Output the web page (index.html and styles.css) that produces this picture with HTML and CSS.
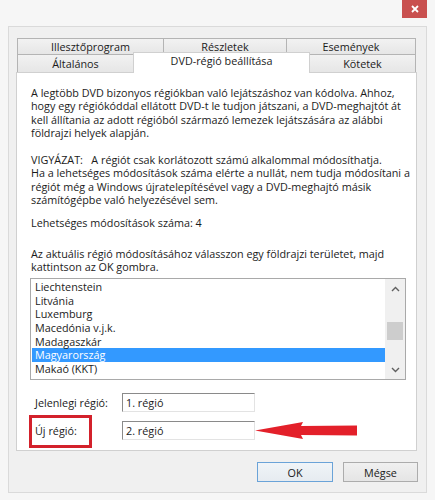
FILE: index.html
```html
<!DOCTYPE html>
<html lang="hu">
<head>
  <meta charset="UTF-8">
  <meta name="viewport" content="width=device-width, initial-scale=1">
  <title>DVD-régió beállítása</title>
  <link rel="stylesheet" href="styles.css">
</head>
<body>
  <div class="window">
    <div class="titlebar">
      <button class="close-btn" aria-label="Bezárás">
        <svg width="8" height="8" viewBox="0 0 8 8"><path d="M1 1 L7 7 M7 1 L1 7" stroke="#fff" stroke-width="1.8"/></svg>
      </button>
    </div>

    <div class="client">
      <div class="tabs">
        <div class="tab-row back">
          <div class="tab t-driver">Illesztőprogram</div>
          <div class="tab t-details">Részletek</div>
          <div class="tab t-events">Események</div>
        </div>
        <div class="tab-row front">
          <div class="tab t-general">Általános</div>
          <div class="tab t-dvd active">DVD-régió beállítása</div>
          <div class="tab t-volumes">Kötetek</div>
        </div>
      </div>

      <div class="page">
        <p class="intro">A legtöbb DVD bizonyos régiókban való lejátszáshoz van kódolva. Ahhoz,<br>hogy egy régiókóddal ellátott DVD-t le tudjon játszani, a DVD-meghajtót át<br>kell állítania az adott régióból származó lemezek lejátszására az alábbi<br>földrajzi helyek alapján.</p>
        <p class="warning">VIGYÁZAT:&nbsp;&nbsp;&nbsp;A régiót csak korlátozott számú alkalommal módosíthatja.<br>Ha a lehetséges módosítások száma elérte a nullát, nem tudja módosítani a<br>régiót még a Windows újratelepítésével vagy a DVD-meghajtó másik<br>számítógépbe való helyezésével sem.</p>
        <p class="changes">Lehetséges módosítások száma: 4</p>
        <p class="hint">Az aktuális régió módosításához válasszon egy földrajzi területet, majd<br>kattintson az OK gombra.</p>

        <div class="listbox">
          <ul class="items">
            <li>Liechtenstein</li>
            <li>Litvánia</li>
            <li>Luxemburg</li>
            <li>Macedónia v.j.k.</li>
            <li>Madagaszkár</li>
            <li class="selected">Magyarország</li>
            <li>Makaó (KKT)</li>
            <li>Malajzia</li>
          </ul>
          <div class="scrollbar">
            <svg class="chevron" width="9" height="6" viewBox="0 0 9 6"><path d="M1 5 L4.5 1.5 L8 5" fill="none" stroke="#606060" stroke-width="1.4"/></svg>
            <div class="track"><div class="thumb"></div></div>
            <svg class="chevron" width="9" height="6" viewBox="0 0 9 6"><path d="M1 1 L4.5 4.5 L8 1" fill="none" stroke="#606060" stroke-width="1.4"/></svg>
          </div>
        </div>

        <div class="fields">
          <div class="field">
            <span class="label">Jelenlegi régió:</span>
            <input class="textbox" type="text" value="1. régió" readonly>
          </div>
          <div class="field">
            <span class="label marked">Új régió:</span>
            <input class="textbox" type="text" value="2. régió" readonly>
            <svg class="arrow" width="103" height="19" viewBox="0 0 103 19">
              <path d="M0 9.5 L48 1 L46 5 L102 4.5 L102 14.5 L46 14 L48 18 Z" fill="#e3202a"/>
            </svg>
          </div>
        </div>
      </div>

      <div class="buttons">
        <button class="btn default">OK</button>
        <button class="btn">Mégse</button>
      </div>
    </div>
  </div>
</body>
</html>
```

FILE: styles.css
```css
* {
  box-sizing: border-box;
}
body {
  margin: 0;
  font-family: "Open Sans", "Noto Sans", Arial, sans-serif;
  font-size: 10.8px;
  color: #1b1b1b;
  background-color: #fff;
}
.window {
  width: 435px;
  height: 500px;
  background-color: #f6f6f6;
}
.titlebar {
  height: 26px;
  display: flex;
  justify-content: flex-end;
  align-items: flex-start;
  padding-right: 8px;
}
.close-btn {
  width: 25px;
  height: 18px;
  border: none;
  padding: 0;
  background-color: #c9504f;
  display: flex;
  align-items: center;
  justify-content: center;
}
.client {
  margin: 0 8px;
  height: 467px;
  background-color: #f0f0f0;
  border: 1px solid #dadada;
}

/* tabs */
.tabs {
  padding: 11px 0 0 8px;
}
.tab-row {
  display: flex;
  align-items: flex-end;
}
.tab-row.back {
  height: 16px;
}
.tab-row.front {
  height: 18px;
}
.tab {
  height: 100%;
  border: 1px solid #b4b4b4;
  border-bottom: none;
  background: linear-gradient(#f2f2f2, #e6e6e6);
  text-align: center;
  white-space: nowrap;
}
.tab + .tab {
  margin-left: -1px;
}
.back .tab {
  line-height: 14px;
  padding-top: 1px;
}
.front .tab {
  line-height: 17px;
}
.t-driver { width: 147px; }
.t-details { width: 124px; }
.t-events { width: 130px; }
.t-general { width: 117px; }
.t-dvd { width: 177px; }
.t-volumes { width: 107px; }
.tab.active {
  position: relative;
  z-index: 1;
  height: 21px;
  margin-top: -2px;
  margin-bottom: -1px;
  background: #fff;
  border-color: #d0d0d0;
  line-height: 16px;
}

/* page */
.page {
  margin: 0 9px 0 7px;
  height: 379px;
  background-color: #fff;
  border: 1px solid #d0d0d0;
  padding: 13px 6px 0 14px;
  line-height: 13.4px;
}
.page p {
  margin: 0;
  white-space: nowrap;
}
.warning {
  margin-top: 13.4px !important;
}
.changes {
  margin-top: 9px !important;
}
.hint {
  margin-top: 18px !important;
}

/* listbox */
.listbox {
  margin: 4px 0 0 -1px;
  width: 376px;
  height: 102px;
  border: 1px solid #a9a9a9;
  display: flex;
  overflow: hidden;
}
.items {
  list-style: none;
  margin: 0;
  padding: 1px 0 0 1px;
  flex: 1;
  line-height: 13.7px;
  overflow: hidden;
}
.items li {
  padding-left: 3px;
  white-space: nowrap;
}
.items li.selected {
  background-color: #3399ff;
  color: #fff;
}
.scrollbar {
  width: 20px;
  background-color: #f0f0f0;
  display: flex;
  flex-direction: column;
  align-items: center;
  padding: 7px 0 6px;
}
.track {
  flex: 1;
  width: 100%;
  padding: 0 2px;
}
.thumb {
  margin-top: 30px;
  height: 18px;
  background-color: #cdcdcd;
}

/* fields */
.fields {
  margin-top: 13px;
  padding-left: 4px;
  display: flex;
  flex-direction: column;
  gap: 9px;
}
.field {
  display: flex;
  align-items: center;
}
.label {
  width: 87px;
}
.label.marked {
  position: relative;
}
.label.marked::after {
  content: "";
  position: absolute;
  left: -6px;
  top: -9px;
  width: 57px;
  height: 27px;
  border: 3px solid #d3212b;
}
.textbox {
  width: 133px;
  height: 19px;
  margin: 0;
  padding: 0 3px;
  font: inherit;
  color: #1b1b1b;
  background-color: #fff;
  border: 1px solid #e3e3e3;
  border-top-color: #8a8a8a;
  border-left-color: #8a8a8a;
  outline: none;
}
.arrow {
  display: block;
}

/* buttons */
.buttons {
  margin-top: 11px;
  padding-right: 8px;
  display: flex;
  justify-content: flex-end;
  gap: 10px;
}
.btn {
  width: 75px;
  height: 20px;
  padding: 0;
  font: inherit;
  color: #1b1b1b;
  background: linear-gradient(#f0f0f0, #e5e5e5);
  border: 1px solid #acacac;
}
.btn.default {
  width: 76px;
  border: 1px solid #6aa3d8;
  background: linear-gradient(#f0f4f8, #e6ebf0);
}
```
